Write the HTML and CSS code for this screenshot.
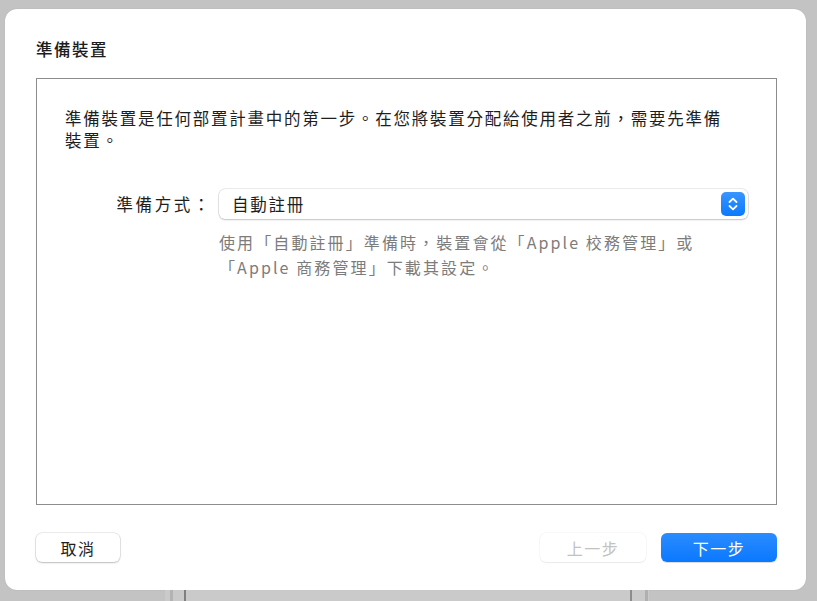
FILE: index.html
```html
<!DOCTYPE html>
<html lang="zh-Hant">
<head>
<meta charset="utf-8">
<link rel="stylesheet" href="styles.css">
</head>
<body>
<div class="backdrop">
  <div class="dialog">
    <h1 class="title">準備裝置</h1>
    <div class="panel">
      <p class="intro">準備裝置是任何部置計畫中的第一步。在您將裝置分配給使用者之前，需要先準備裝置。</p>
      <div class="field">
        <span class="label">準備方式：</span>
        <div class="control">
          <div class="popup">
            <span class="popup-value">自動註冊</span>
            <span class="stepper">
              <svg width="14" height="16" viewBox="0 0 14 16"><path d="M3.5 6 L7 2.6 L10.5 6 M3.5 10 L7 13.4 L10.5 10" fill="none" stroke="#fff" stroke-width="1.8" stroke-linecap="round" stroke-linejoin="round"/></svg>
            </span>
          </div>
          <p class="help">使用「自動註冊」準備時，裝置會從「Apple 校務管理」或<br>「Apple 商務管理」下載其設定。</p>
        </div>
      </div>
    </div>
    <div class="footer">
      <button class="btn">取消</button>
      <div class="right">
        <button class="btn btn-disabled">上一步</button>
        <button class="btn btn-primary">下一步</button>
      </div>
    </div>
  </div>
  <div class="under">
    <span class="line l1"></span><span class="line l2"></span>
    <span class="gap"></span>
    <span class="line l3"></span><span class="line l4"></span>
  </div>
</div>
</body>
</html>
```
FILE: styles.css
```css
* { box-sizing: border-box; }
html, body { margin: 0; padding: 0; }
body {
  width: 817px; height: 601px; overflow: hidden;
  background: #c3c3c3;
  font-family: "PingFang TC", "Noto Sans CJK TC", "Noto Sans", sans-serif;
  color: #222;
}
.backdrop { padding: 9px 11px 0 5px; height: 601px; display: flex; flex-direction: column; }
.dialog {
  width: 801px; height: 581px;
  background: #fff;
  border-radius: 12px;
  padding: 29px 29px 0 31px;
  display: flex; flex-direction: column;
  box-shadow: 0 0 1px rgba(0,0,0,0.2);
}
.title { margin: 0; font-size: 16.5px; letter-spacing: 1.5px; font-weight: 500; line-height: 22px; height: 22px; color: #1c1c1c; }
.panel {
  margin-top: 18px;
  height: 427px;
  border: 1px solid #8d8d8d;
  padding: 28px 28px 0 28px;
}
.intro { margin: 0; font-size: 16.5px; letter-spacing: 1.75px; line-height: 22px; color: #1e1e1e; width: 665px; }
.field { display: flex; margin-top: 38px; }
.label { width: 154px; text-align: right; font-size: 16.5px; letter-spacing: 2.6px; line-height: 30px; padding-right: 7px; color: #1e1e1e; }
.control { display: flex; flex-direction: column; }
.popup {
  width: 529px; height: 30px;
  border-radius: 6px;
  background: #fff;
  box-shadow: 0 0 0 0.5px rgba(0,0,0,0.15), 0 1px 2px rgba(0,0,0,0.18);
  display: flex; align-items: center; justify-content: space-between;
  padding: 0 3px 0 13px;
}
.popup-value { font-size: 16.5px; letter-spacing: 1.75px; color: #1e1e1e; }
.stepper {
  width: 24px; height: 24px; border-radius: 5px;
  background: linear-gradient(#3a95ff, #0a7aff);
  display: flex; align-items: center; justify-content: center;
}
.help { margin: 11px 0 0 0; font-size: 16px; letter-spacing: 2.1px; line-height: 25px; color: #7c7c7c; padding-left: 0; }
.footer { margin-top: 28px; display: flex; justify-content: space-between; align-items: center; }
.right { display: flex; gap: 15px; }
.btn {
  font-family: inherit;
  height: 29px; border: none; border-radius: 6px;
  background: #fff; font-size: 16px; letter-spacing: 1.5px; color: #1e1e1e;
  box-shadow: 0 0 0 0.5px rgba(0,0,0,0.15), 0 1px 2px rgba(0,0,0,0.2);
  width: 84px; padding: 0;
}
.btn-disabled { width: 106px; color: #c2c2c2; box-shadow: 0 0 0 0.5px rgba(0,0,0,0.06), 0 1px 1px rgba(0,0,0,0.06); }
.btn-primary { width: 116px; color: #fff; background: linear-gradient(#2b8cff, #0a78ff); box-shadow: 0 1px 1px rgba(0,0,0,0.15); }
.under { display: flex; height: 11px; margin-left: 160px; width: 484px; background: #cacaca; }
.line { display: block; width: 2px; height: 11px; background: #9a9a9a; }
.l1 { margin-left: 5px; background: #b3b3b3; width: 3px; }
.l2 { margin-left: 11px; background: #7f7f7f; }
.gap { flex: 1; }
.l3 { background: #8c8c8c; }
.l4 { margin-left: 13px; margin-right: 1px; background: #b0b0b0; width: 3px; }
```
